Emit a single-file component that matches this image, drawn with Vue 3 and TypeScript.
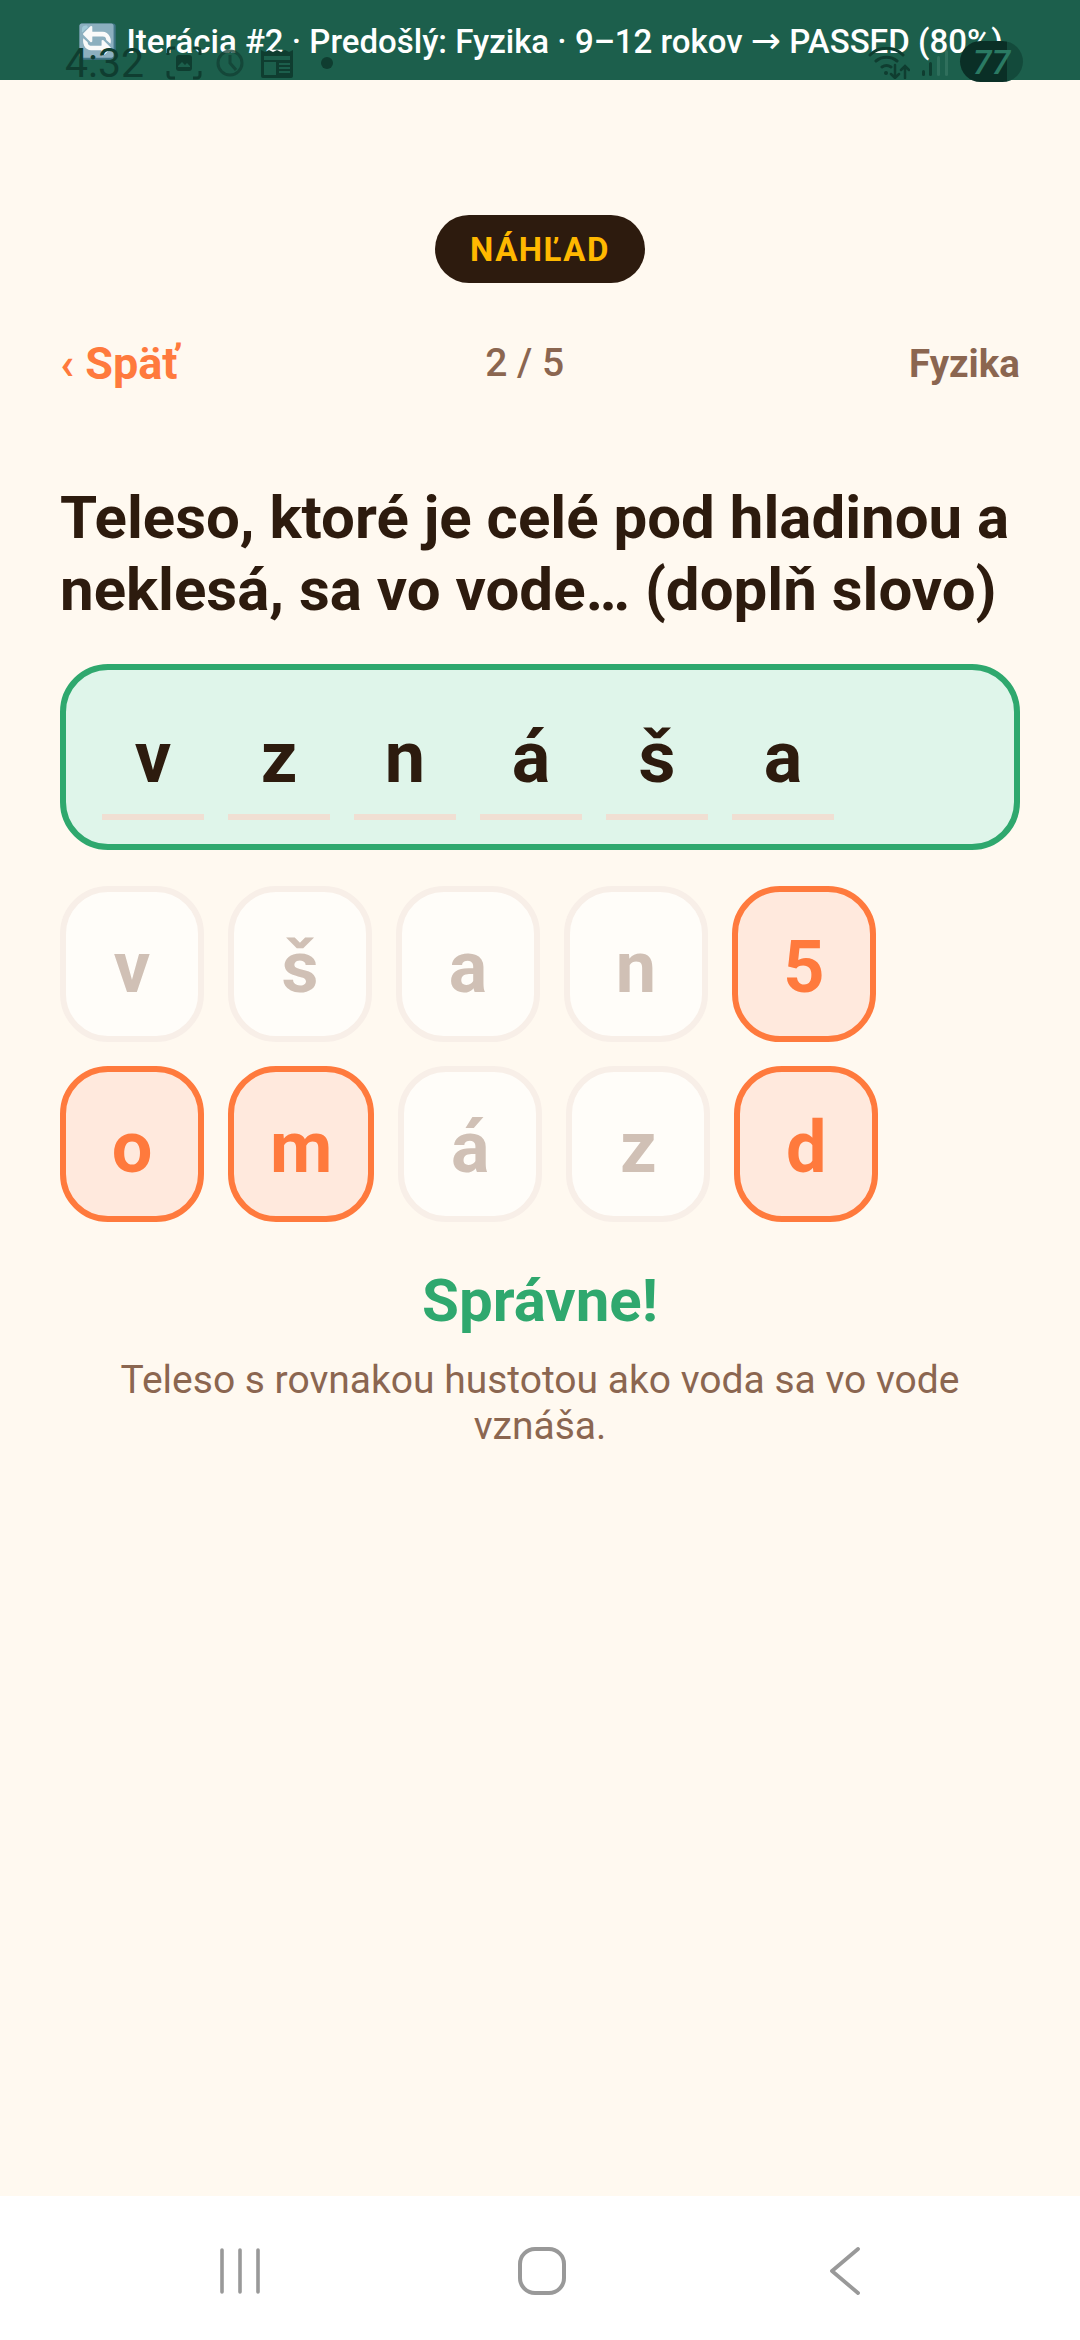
<script setup lang="ts">
interface Tile {
  ch: string;
  wrong: boolean;
}

const slots = ["v", "z", "n", "á", "š", "a"];

const rows: Tile[][] = [
  [
    { ch: "v", wrong: false },
    { ch: "š", wrong: false },
    { ch: "a", wrong: false },
    { ch: "n", wrong: false },
    { ch: "5", wrong: true },
  ],
  [
    { ch: "o", wrong: true },
    { ch: "m", wrong: true },
    { ch: "á", wrong: false },
    { ch: "z", wrong: false },
    { ch: "d", wrong: true },
  ],
];
</script>

<template>
  <div class="screen">
    <div class="banner">
      <span class="banner-text">🔄 Iterácia #2 · Predošlý: Fyzika · 9–12 rokov <span class="arrow">→</span> PASSED (80%)</span>
      <div class="status">
        <div class="status-left">
          <span class="clock">4:32</span>
          <svg class="ic-shot" width="36" height="34" viewBox="0 0 36 34" fill="none" stroke="#0f3d30" stroke-width="3">
            <path d="M2 9V5a3 3 0 0 1 3-3h4M27 2h4a3 3 0 0 1 3 3v4M34 25v4a3 3 0 0 1-3 3h-4M9 32H5a3 3 0 0 1-3-3v-4" />
            <rect x="10" y="9" width="16" height="16" rx="3" fill="#0f3d30" stroke="none" />
            <path d="M12 20l4-4 3 3 2-2 3 3v1H12z" fill="#1c5f4c" stroke="none" />
          </svg>
          <svg class="ic-clock" width="28" height="28" viewBox="0 0 28 28" fill="none" stroke="#123f33" stroke-width="3" opacity="0.75">
            <circle cx="14" cy="14" r="12" />
            <path d="M14 6v8l6 7" />
          </svg>
          <svg class="ic-news" width="34" height="30" viewBox="0 0 34 30" fill="#0f3d30">
            <path d="M1 2l4 2 4-2 4 2 4-2 4 2 4-2 4 2 4-2v26a2 2 0 0 1-2 2H3a2 2 0 0 1-2-2z" />
            <rect x="4" y="8" width="26" height="4" fill="#1c5f4c" />
            <rect x="4" y="14" width="12" height="13" fill="#1c5f4c" />
            <path d="M19 16h11M19 20h11M19 24h11" stroke="#1c5f4c" stroke-width="2" />
          </svg>
          <span class="dot"></span>
        </div>
        <div class="status-right">
          <svg width="42" height="32" viewBox="0 0 42 32" fill="none" stroke="#0f3d30" stroke-width="3" stroke-linecap="round">
            <path d="M2 8C11-1 26-1 35 8M8 14c6-5 15-5 21 0M14 20c3-2 6-2 9 0" />
            <circle cx="18" cy="26" r="2" fill="#0f3d30" stroke="none" />
            <path d="M27 18v13M23 27l4 4 4-4M37 31V20M33 23l4-4 4 4" stroke-width="2.5" />
          </svg>
          <svg width="26" height="26" viewBox="0 0 26 26">
            <rect x="0" y="20" width="3" height="6" rx="1.5" fill="#0f3d30" />
            <rect x="7" y="12" width="3" height="14" rx="1.5" fill="#0f3d30" />
            <rect x="15" y="6" width="3" height="20" rx="1.5" fill="#2f6f5c" />
            <rect x="23" y="0" width="3" height="26" rx="1.5" fill="#2f6f5c" />
          </svg>
          <span class="battery">77</span>
        </div>
      </div>
    </div>

    <main class="content">
      <div class="badge-row">
        <span class="badge">NÁHĽAD</span>
      </div>

      <div class="topbar">
        <span class="back">‹ Späť</span>
        <span class="counter">2 / 5</span>
        <span class="subject">Fyzika</span>
      </div>

      <h1 class="question">Teleso, ktoré je celé pod hladinou a neklesá, sa vo vode… (doplň slovo)</h1>

      <div class="answer">
        <div v-for="(s, i) in slots" :key="i" class="slot">{{ s }}</div>
      </div>

      <div class="tiles">
        <div v-for="(row, r) in rows" :key="r" class="tile-row">
          <div v-for="(t, i) in row" :key="i" class="tile" :class="{ wrong: t.wrong }">{{ t.ch }}</div>
        </div>
      </div>

      <div class="result">Správne!</div>
      <p class="explain">Teleso s rovnakou hustotou ako voda sa vo vode vznáša.</p>
    </main>

    <nav class="navbar">
      <svg width="48" height="46" viewBox="0 0 48 46" fill="none" stroke="#999" stroke-width="3.6" stroke-linecap="round">
        <path d="M6 2v42M24 2v42M42 2v42" />
      </svg>
      <svg width="48" height="48" viewBox="0 0 48 48" fill="none" stroke="#999" stroke-width="4">
        <rect x="2" y="2" width="44" height="44" rx="15" />
      </svg>
      <svg width="30" height="48" viewBox="0 0 30 48" fill="none" stroke="#999" stroke-width="3.8" stroke-linecap="round" stroke-linejoin="round">
        <path d="M28 2 2 24l26 22" />
      </svg>
    </nav>
  </div>
</template>

<style>
html,
body {
  margin: 0;
  background: #fff9f0;
}
</style>

<style scoped>
.screen {
  width: 1080px;
  height: 2340px;
  display: flex;
  flex-direction: column;
  background: #fff9f0;
  font-family: Roboto, "Noto Sans", sans-serif;
  overflow: hidden;
}

.banner {
  position: relative;
  height: 80px;
  flex: none;
  background: #1c5f4c;
  display: flex;
  justify-content: center;
  align-items: flex-start;
}

.banner-text {
  margin-top: 22px;
  color: #fff;
  font-size: 33px;
  font-weight: 500;
  line-height: 40px;
  white-space: nowrap;
}

.arrow {
  font-family: "DejaVu Sans", sans-serif;
  font-weight: 400;
  font-size: 36px;
  line-height: 30px;
}

/* system status bar shows through the banner */
.status {
  position: absolute;
  left: 65px;
  right: 57px;
  bottom: 0;
  height: 34px;
  display: flex;
  justify-content: space-between;
  align-items: center;
}

.status-left,
.status-right {
  display: flex;
  align-items: center;
}

.clock {
  width: 81px;
  color: #0f3d30;
  font-size: 41px;
  line-height: 34px;
}

.ic-shot {
  margin-left: 20px;
}

.ic-clock {
  margin-left: 14px;
}

.ic-news {
  margin-left: 16px;
}

.dot {
  width: 12px;
  height: 12px;
  border-radius: 50%;
  background: #0f3d30;
  margin-left: 27px;
}

.status-right {
  gap: 12px;
}

.battery {
  width: 63px;
  height: 41px;
  margin-top: -4px;
  border-radius: 21px;
  background: linear-gradient(90deg, #0a2f26 75%, #134a3b 75%);
  color: #2a7a63;
  font-size: 34px;
  font-style: italic;
  font-weight: 500;
  text-align: center;
  line-height: 42px;
}

.content {
  flex: 1;
  display: flex;
  flex-direction: column;
  padding: 0 60px;
}

.badge-row {
  display: flex;
  justify-content: center;
  margin-top: 135px;
}

.badge {
  width: 210px;
  height: 68px;
  border-radius: 34px;
  background: #2d1b0e;
  color: #ffb800;
  font-size: 33px;
  font-weight: 700;
  letter-spacing: 1.5px;
  display: flex;
  align-items: center;
  justify-content: center;
}

.topbar {
  display: flex;
  justify-content: space-between;
  align-items: center;
  margin-top: 55px;
  height: 50px;
}

.back {
  color: #ff7a3d;
  font-size: 45px;
  font-weight: 700;
}

.counter {
  color: #8b6650;
  font-size: 39px;
  font-weight: 500;
  margin-right: 38px;
}

.subject {
  color: #8b6650;
  font-size: 38.5px;
  font-weight: 700;
}

.question {
  margin: 94px 0 0;
  color: #2d1b0e;
  font-size: 60px;
  font-weight: 700;
  line-height: 72px;
}

.answer {
  margin-top: 38px;
  box-sizing: border-box;
  height: 186px;
  border: 6px solid #2fa86e;
  border-radius: 48px;
  background: #dff5ea;
  display: flex;
  gap: 24px;
  padding: 24px 36px;
}

.slot {
  width: 102px;
  box-sizing: border-box;
  padding-top: 6px;
  border-bottom: 6px solid #f0dfd3;
  color: #2d1b0e;
  font-size: 72px;
  font-weight: 700;
  display: flex;
  align-items: center;
  justify-content: center;
}

.tiles {
  margin-top: 36px;
  display: flex;
  flex-direction: column;
  gap: 24px;
}

.tile-row {
  display: flex;
  gap: 24px;
}

.tile {
  min-width: 144px;
  height: 156px;
  box-sizing: border-box;
  padding: 6px 36px 0;
  border: 6px solid #f8efe8;
  border-radius: 48px;
  background: #fffdf9;
  color: #d0c0b5;
  font-size: 72px;
  font-weight: 700;
  display: flex;
  align-items: center;
  justify-content: center;
}

.tile.wrong {
  border-color: #ff7a3d;
  background: #ffe9dd;
  color: #ff7a3d;
}

.result {
  margin-top: 46px;
  text-align: center;
  color: #2fa86e;
  font-size: 60px;
  font-weight: 700;
  line-height: 66px;
}

.explain {
  margin: 23px 40px 0;
  text-align: center;
  color: #8b6650;
  font-size: 39px;
  line-height: 46px;
}

.navbar {
  flex: none;
  box-sizing: border-box;
  height: 144px;
  padding-top: 6px;
  background: #fff;
  display: flex;
  align-items: center;
}

.navbar svg:nth-child(1) {
  margin-left: 216px;
}

.navbar svg:nth-child(2) {
  margin-left: 254px;
}

.navbar svg:nth-child(3) {
  margin-left: 264px;
}
</style>
